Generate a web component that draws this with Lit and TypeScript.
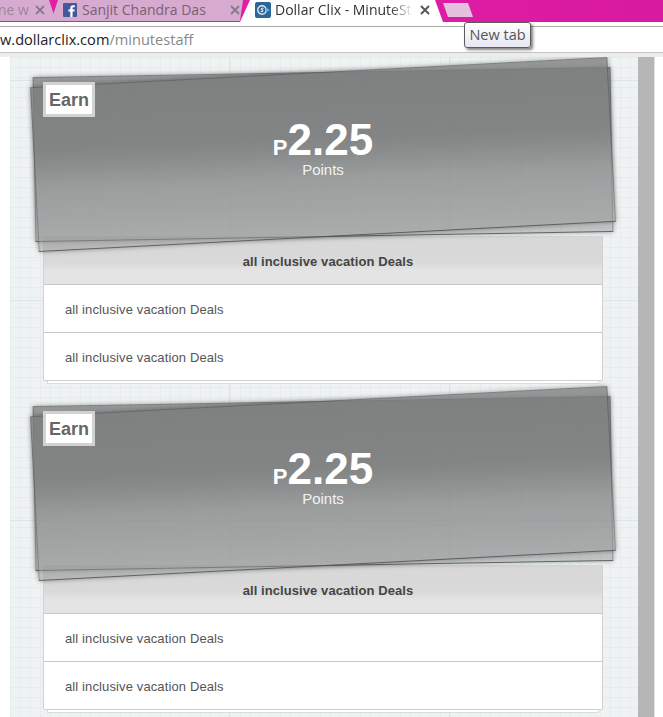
import { LitElement, html, css, svg } from "lit";
import { customElement } from "lit/decorators.js";

const closeIcon = svg`<svg class="x" viewBox="0 0 10 10" width="10" height="10"><path d="M1 1 L9 9 M9 1 L1 9" fill="none" stroke="currentColor" stroke-width="1.9"/></svg>`;

@customElement("app-root")
export class AppRoot extends LitElement {
  static styles = css`
    :host { display: block; width: 663px; height: 717px; overflow: hidden; background: #fff; position: relative; font-family: "Liberation Sans", Arial, sans-serif; }
    .strip { height: 26px; background: linear-gradient(#fff,#fff) bottom/100% 4px no-repeat, linear-gradient(90deg,#e31ea8,#dc1ca2 70%,#d81aa0); display: flex; }
    .tab { height: 22px; display: flex; align-items: center; flex: none; font-family: "Open Sans", sans-serif; font-size: 14px; white-space: nowrap; overflow: hidden; position: relative; }
    .t1 { width: 57px; background: #d7aacf; clip-path: polygon(0 0, 49px 0, 56px 21px, 0 21px); color: #8a7a88; }
    .t1 .title { width: 31px; margin-left: -2px; margin-top: -3px; overflow: hidden; flex: none; direction: rtl; text-align: left; opacity: .75; }
    .t1 .x { margin-left: 6px; margin-top: -2px; }
    .t2 { width: 195px; margin-left: -7px; background: #d7aacf; clip-path: polygon(8px 0, 4px 12px, 0 21px, 190px 21px, 193px 0); color: #7b5f78; }
    .t2 .fb { margin-left: 13px; margin-top: -3px; }
    .t2 .title { margin-left: 5px; width: 127px; flex: none; margin-top: -3px; }
    .t2 .x { margin-left: 21px; margin-top: -2px; }
    .x { flex: none; color: #8b7b8a; }
    .t3 { width: 203px; height: 26px; margin-left: -5px; background: #fff; clip-path: polygon(10px 0, 0 22px, 0 26px, 203px 26px, 203px 22px, 195px 0); color: #333; align-items: flex-start; }
    .t3 .ico { margin: 2px 0 0 15px; flex: none; }
    .t3 .title { margin: 0 0 0 4px; width: 138px; flex: none; overflow: hidden; line-height: 19px; -webkit-mask-image: linear-gradient(90deg,#000 115px,transparent 138px); mask-image: linear-gradient(90deg,#000 115px,transparent 138px); }
    .t3 .x { margin: 5px 0 0 7px; color: #555; }
    .newtab { width: 30px; height: 14px; margin: 3px 0 0 0; flex: none; background: #e4c1dd; clip-path: polygon(0 0, 25px 0, 30px 14px, 5px 14px); }
    .addr { height: 25px; border-top: 1px solid #a9a9a9; border-bottom: 1px solid #c4c4c4; background: #fff; font-family: "Open Sans", sans-serif; font-size: 14.6px; line-height: 24px; color: #222; white-space: nowrap; overflow: hidden; }
    .addr span { color: #888; }
    .band { height: 4px; background: #ececec; }
    .tip { position: absolute; left: 464px; top: 22px; width: 67px; height: 26px; box-sizing: border-box; border: 1px solid #5c5c5c; border-radius: 3px; background: linear-gradient(#fff,#e6e6f2); box-shadow: 2px 2px 3px rgba(0,0,0,.5); font-family: "Open Sans", sans-serif; font-size: 14.5px; line-height: 23px; text-align: center; color: #555; white-space: nowrap; }
    .main { display: flex; height: 660px; overflow: hidden; }
    .gutter { width: 10px; flex: none; }
    .page { width: 628px; flex: none; box-sizing: border-box; padding-left: 33px; overflow: hidden;
      background-color: #eef2f2;
      background-image:
        linear-gradient(90deg, #dbe6ec 1px, transparent 1px),
        linear-gradient(#dbe6ec 1px, transparent 1px),
        linear-gradient(90deg, rgba(190,205,205,.14) 1px, transparent 1px),
        linear-gradient(rgba(190,205,205,.14) 1px, transparent 1px);
      background-size: 220px 220px, 220px 220px, 10px 10px, 10px 10px;
      background-position: -1px 0, 0 23px, 0 0, 0 0;
    }
    .sb { width: 16px; flex: none; background: #b6b6b6; border-right: 1px solid #e2e2e2; }
    .deal { width: 560px; padding-bottom: 5px; }
    .ribbon { height: 179px; position: relative; z-index: 1; display: flex; flex-direction: column; align-items: center; color: #fff; }
    .layer { position: absolute; left: -9px; top: 15px; width: 578px; height: 165px; box-sizing: border-box; border: 1px solid rgba(50,50,50,.32); border-top-color: rgba(50,50,50,.45); border-bottom-color: rgba(50,50,50,.5); box-shadow: 0 0 5px rgba(0,0,0,.35); filter: blur(.4px);
      background: linear-gradient(rgba(120,122,122,.76), rgba(124,126,126,.76) 40%, rgba(134,136,136,.55) 64%, rgba(148,150,150,.5)); }
    .l1 { transform: rotate(-1deg); }
    .l2 { transform: rotate(-3deg); }
    .earn { position: absolute; left: 0; top: 25px; width: 52px; height: 35px; box-sizing: border-box; border: 3px solid #d2d2d2; background: #fff; color: #666; font-weight: bold; font-size: 18px; line-height: 31px; text-align: center; }
    .amount { position: relative; margin-top: 61px; height: 44px; line-height: 44px; font-weight: bold; font-size: 44px; white-space: nowrap; }
    .amount small { font-size: 22px; }
    .label { position: relative; font-size: 15px; line-height: 16px; color: #f2f2f2; }
    .panel { background: #fff; border: solid #d0d0d0; border-width: 0 1px 1px; border-radius: 0 0 2px 2px; color: #555; font-size: 13px; letter-spacing: .12px; position: relative; }
    .panel::after { content: ""; position: absolute; left: 3px; right: 3px; bottom: -4px; height: 3px; box-sizing: border-box; background: #fff; border: solid #dcdcdc; border-width: 0 1px 1px; }
    .head { height: 46px; border-bottom: 1px solid #c8c8c8; padding: 2px 0 0 10px; background: linear-gradient(#d8d8d8, #d9d9d9 55%, #e4e4e4 72%, #e4e4e4); font-weight: bold; color: #444; letter-spacing: .08px; display: flex; align-items: center; justify-content: center; }
    .row { height: 46px; padding: 1px 0 0 21px; border-bottom: 1px solid #c8c8c8; display: flex; align-items: center; }
    .row:last-child { border-bottom: none; }
  `;

  private deal() {
    return html`<section class="deal">
      <div class="ribbon">
        <div class="layer l1"></div>
        <div class="layer l2"></div>
        <div class="earn">Earn</div>
        <div class="amount"><small>P</small>2.25</div>
        <div class="label">Points</div>
      </div>
      <div class="panel">
        <div class="head">all inclusive vacation Deals</div>
        <div class="row">all inclusive vacation Deals</div>
        <div class="row">all inclusive vacation Deals</div>
      </div>
    </section>`;
  }

  render() {
    return html`
      <div class="strip">
        <div class="tab t1"><span class="title">ne w</span>${closeIcon}</div>
        <div class="tab t2">
          <svg class="fb" viewBox="0 0 14 14" width="14" height="14"><rect width="14" height="14" rx="1" fill="#44599b"/><path d="M9.6 14V8.6h1.8l.3-2.1H9.6V5.2c0-.6.2-1 1-1h1.2V2.3c-.2 0-.9-.1-1.7-.1-1.7 0-2.8 1-2.8 2.8v1.5H5.4v2.1h1.9V14z" fill="#fff"/></svg>
          <span class="title">Sanjit Chandra Das</span>${closeIcon}
        </div>
        <div class="tab t3">
          <svg class="ico" viewBox="0 0 16 16" width="16" height="16"><rect width="16" height="16" rx="2" fill="#2f6596"/><circle cx="7" cy="8" r="4.2" fill="none" stroke="#dfeaf3" stroke-width="1.4"/><path d="M8.6 6.3H6.3v1.6h1.5v1.7H5.5" fill="none" stroke="#dfeaf3" stroke-width="1"/><path d="M11 5.4 15 8l-4 2.6z" fill="#58b4e4"/></svg>
          <span class="title">Dollar Clix - MinuteStaff</span>${closeIcon}
        </div>
        <div class="newtab"></div>
      </div>
      <div class="addr">w.dollarclix.com<span>/minutestaff</span></div>
      <div class="band"></div>
      <div class="main">
        <div class="gutter"></div>
        <div class="page">${this.deal()}${this.deal()}</div>
        <div class="sb"></div>
      </div>
      <div class="tip">New tab</div>
    `;
  }
}
